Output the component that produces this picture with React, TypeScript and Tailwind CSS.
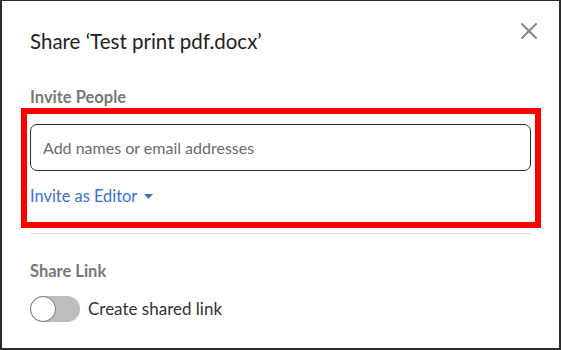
import { X } from 'lucide-react'

export default function App() {
    return (
        <div className="h-[350px] w-[561px] bg-white border-l-2 border-r-2 border-b-2 border-t border-[#2b2b2b] font-['Lato',sans-serif] overflow-hidden">
            <div className="flex items-start justify-between pl-[28px] pr-[16px] pt-[16px]">
                <h1 className="mt-[10px] text-[20.5px] leading-[28px] text-[#222]">Share ‘Test print pdf.docx’</h1>
                <X className="w-[28px] h-[28px] text-[#888]" strokeWidth={1.7} />
            </div>
            <div className="px-[28px] pt-[32px]">
                <div className="text-[16.5px] font-bold text-[#777] leading-[21px]">Invite People</div>
                <div className="ml-[-9px] mr-[-10px] border-[6px] border-[#ff0000] pl-[3px] pr-[4px] pt-[10px] pb-[16px]">
                    <div className="h-[47px] border border-[#2b2b2b] rounded-[7px] flex items-center px-[12px]">
                        <input className="w-full outline-none text-[16px] text-[#333] placeholder:text-[#6b6b6b]" placeholder="Add names or email addresses" />
                    </div>
                    <button className="mt-[15px] flex items-center gap-[7px] text-[16.4px] text-[#3d6fd8] leading-[20px]">
                        Invite as Editor
                        <svg width="9" height="5" viewBox="0 0 9 5"><path d="M0 0h9L4.5 5z" fill="#3d6fd8" /></svg>
                    </button>
                </div>
                <div className="mt-[5px] h-px bg-[#ddd]" />
                <div className="mt-[26px] text-[16.5px] font-bold text-[#777] leading-[22px]">Share Link</div>
                <label className="mt-[14px] flex items-center gap-[8px]">
                    <span className="relative w-[50px] h-[26px] rounded-full bg-[#bdbdbd]">
                        <span className="absolute left-0 top-0 w-[26px] h-[26px] rounded-full bg-white border border-[#777]" />
                    </span>
                    <span className="text-[17px] text-[#333]">Create shared link</span>
                </label>
            </div>
        </div>
    )
}
